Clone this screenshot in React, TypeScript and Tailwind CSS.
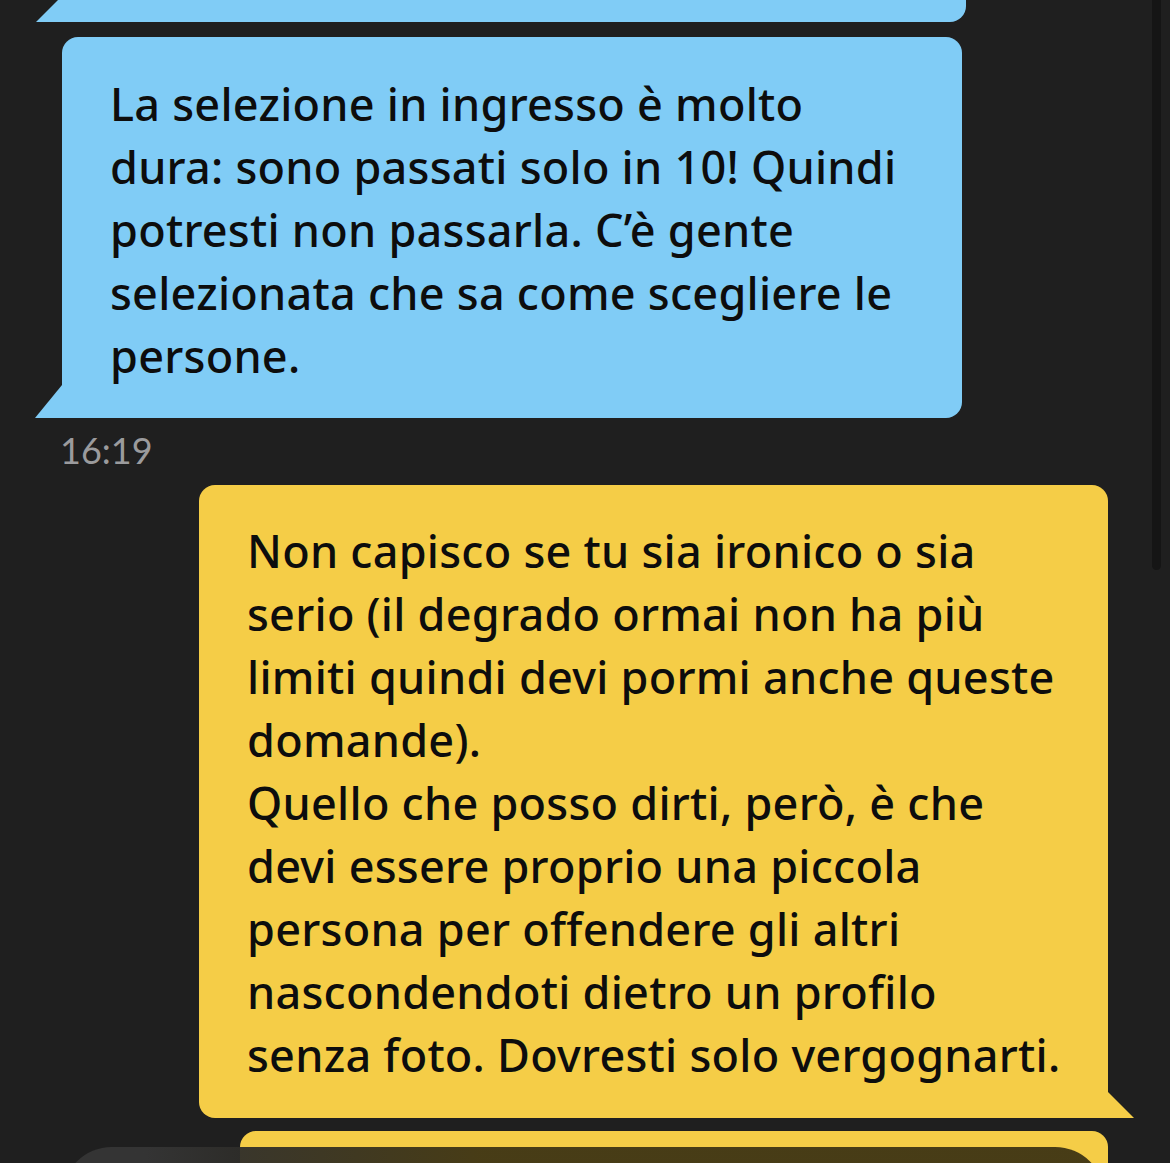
const blueLines = [
  'La selezione in ingresso è molto',
  'dura: sono passati solo in 10! Quindi',
  'potresti non passarla. C’è gente',
  'selezionata che sa come scegliere le',
  'persone.',
];

const yellowLines = [
  'Non capisco se tu sia ironico o sia',
  'serio (il degrado ormai non ha più',
  'limiti quindi devi pormi anche queste',
  'domande).',
  'Quello che posso dirti, però, è che',
  'devi essere proprio una piccola',
  'persona per offendere gli altri',
  'nascondendoti dietro un profilo',
  'senza foto. Dovresti solo vergognarti.',
];

function BubbleText({ lines }: { lines: string[] }) {
  return (
    <div className="text-[45px] leading-[63px] font-medium tracking-[0.25px] text-[#0d0d0d] font-['Noto_Sans',sans-serif]">
      {lines.map((l, i) => (
        <div key={i} className="whitespace-nowrap">{l}</div>
      ))}
    </div>
  );
}

export default function App() {
  return (
    <div className="relative w-[1170px] h-[1163px] overflow-hidden bg-[#1f1f1f]">
      <div className="flex flex-col">
        {/* previous message, cut off at the top */}
        <div className="relative ml-[62px] w-[904px] h-[22px] bg-[#80ccf6] rounded-br-[16px]">
          <svg className="absolute left-[-26px] top-0" width="26" height="22" viewBox="0 0 26 22">
            <polygon points="22,0 26,0 26,22 0,22" fill="#80ccf6" />
          </svg>
        </div>

        <div className="relative mt-[15px] ml-[62px] w-[900px] h-[381px] bg-[#80ccf6] rounded-t-[16px] rounded-br-[16px] pl-[48px] pt-[35px]">
          <BubbleText lines={blueLines} />
          <svg className="absolute left-[-27px] bottom-0" width="27" height="33" viewBox="0 0 27 33">
            <polygon points="27,0 27,33 0,33" fill="#80ccf6" />
          </svg>
        </div>

        <div className="ml-[60px] mt-[11px] h-[56px] text-[36px] leading-[42px] text-[#9b9b9d] font-['Lato',sans-serif]">
          16:19
        </div>

        <div className="relative ml-[199px] w-[909px] h-[633px] bg-[#f5cd47] rounded-t-[16px] rounded-bl-[16px] pl-[48px] pt-[34px]">
          <BubbleText lines={yellowLines} />
          <svg className="absolute right-[-26px] bottom-0" width="26" height="26" viewBox="0 0 26 26">
            <polygon points="0,0 26,26 0,26" fill="#f5cd47" />
          </svg>
        </div>

        <div className="mt-[13px] ml-[240px] w-[868px] h-[80px] bg-[#f5cd47] rounded-t-[16px]" />
      </div>

      {/* scrollbar */}
      <div className="absolute right-[9px] top-0 w-[9px] h-[570px] bg-[#151515] rounded-b-full" />

      {/* composer overlay at the bottom */}
      <div className="absolute left-[62px] right-[65px] top-[1147px] h-[100px] rounded-[60px] bg-linear-to-r from-[#343434] from-[8%] to-[#1c180acc] to-[40%]" />
    </div>
  );
}
